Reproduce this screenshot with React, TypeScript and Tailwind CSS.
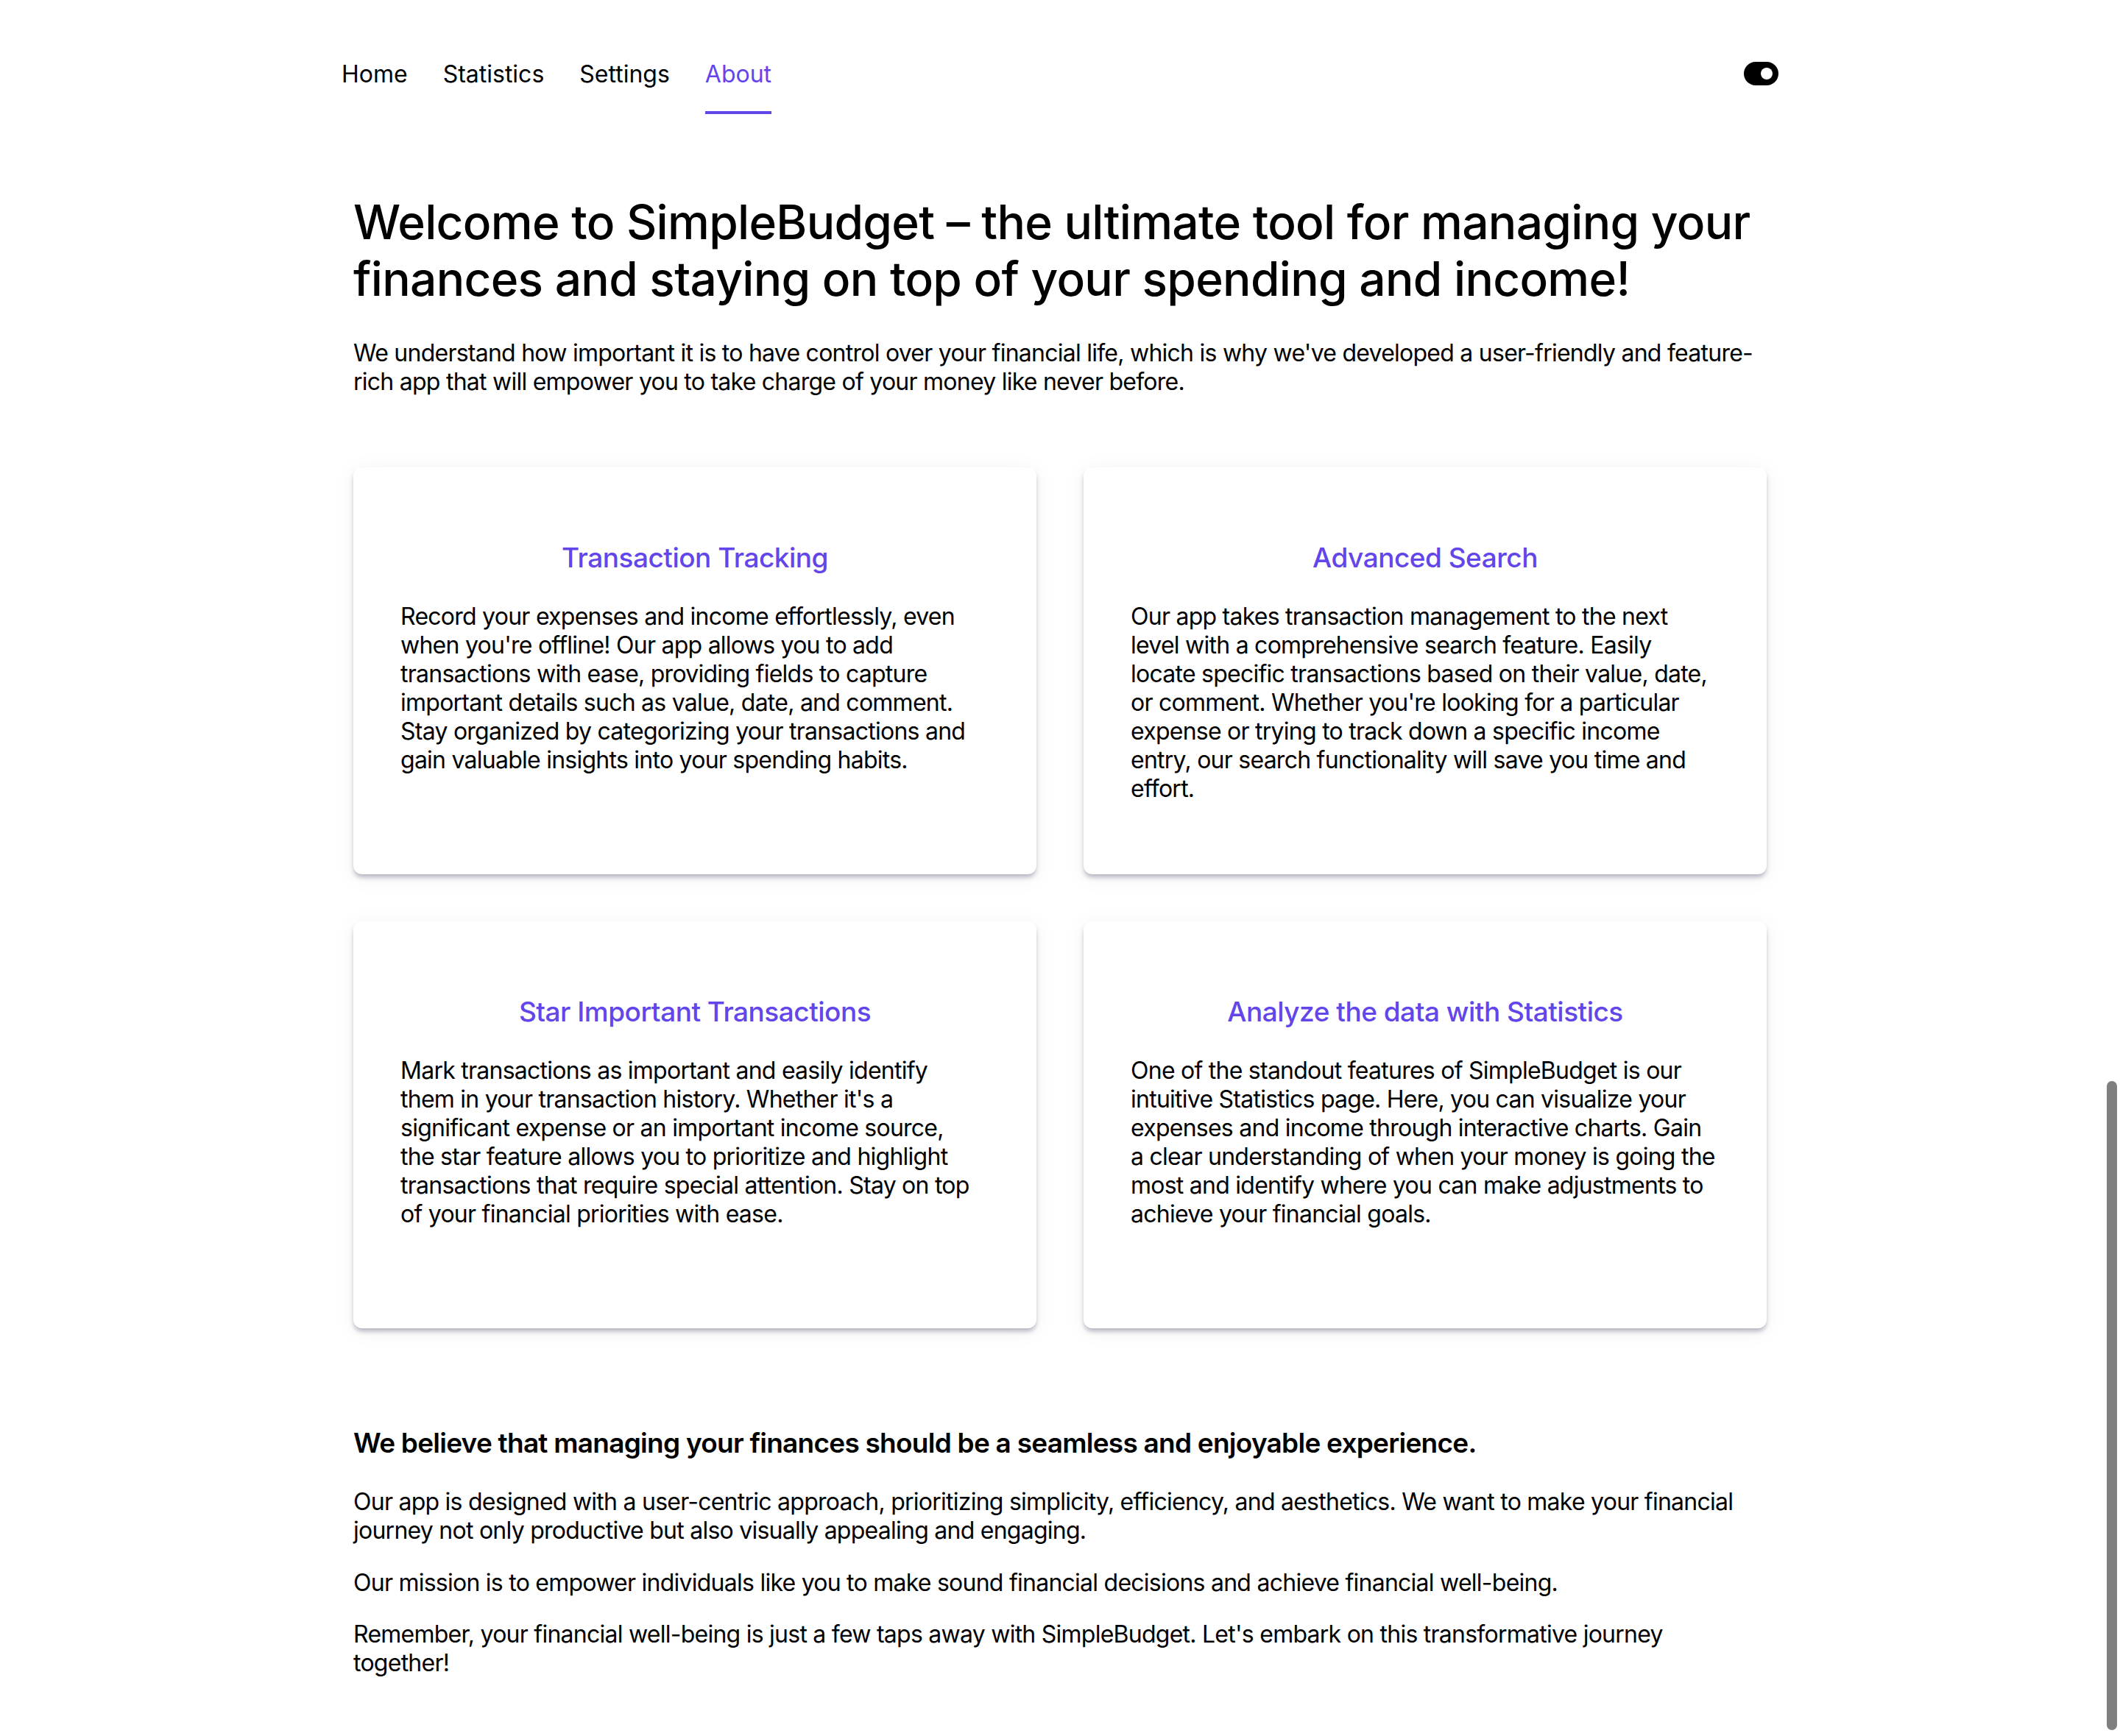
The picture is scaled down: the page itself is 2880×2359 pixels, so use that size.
import type { ReactNode } from "react";

const features: { title: string; text: ReactNode }[] = [
  {
    title: "Transaction Tracking",
    text: "Record your expenses and income effortlessly, even when you're offline! Our app allows you to add transactions with ease, providing fields to capture important details such as value, date, and comment. Stay organized by categorizing your transactions and gain valuable insights into your spending habits.",
  },
  {
    title: "Advanced Search",
    text: "Our app takes transaction management to the next level with a comprehensive search feature. Easily locate specific transactions based on their value, date, or comment. Whether you're looking for a particular expense or trying to track down a specific income entry, our search functionality will save you time and effort.",
  },
  {
    title: "Star Important Transactions",
    text: (
      <>
        Mark transactions as important and easily identify
        <br />
        them in your transaction history. Whether it's a significant expense or an important income source,
        <br />
        the star feature allows you to prioritize and highlight transactions that require special attention. Stay on top of your financial priorities with ease.
      </>
    ),
  },
  {
    title: "Analyze the data with Statistics",
    text: "One of the standout features of SimpleBudget is our intuitive Statistics page. Here, you can visualize your expenses and income through interactive charts. Gain a clear understanding of when your money is going the most and identify where you can make adjustments to achieve your financial goals.",
  },
];

const links = ["Home", "Statistics", "Settings", "About"];

function FeatureCard(props: { title: string; text: ReactNode }) {
  return (
    <div className="bg-white rounded-[12px] px-[64px] pt-[100px] pb-[97px] shadow-[0_5px_6px_-1px_rgba(70,70,105,0.38),0_4px_30px_rgba(0,0,0,0.06)]">
      <h3 className="text-center text-[37px] leading-[45px] font-medium tracking-[-0.5px] text-[#6246ea]">{props.title}</h3>
      <p className="mt-[38px] text-[32px] leading-[39px] tracking-[-0.75px]">{props.text}</p>
    </div>
  );
}

export default function App() {
  return (
    <div className="min-h-[2359px] bg-white text-black font-['Inter',sans-serif] relative">
      <nav className="w-[1952px] mx-auto pt-[50px] flex justify-between items-center">
        <div className="flex gap-[48px]">
          {links.map((l) => (
            <a
              key={l}
              className={
                l === "About"
                  ? "py-[31px] text-[32px] leading-[39px] border-b-4 border-[#6246ea] text-[#6246ea]"
                  : "py-[31px] text-[32px] leading-[39px] border-b-4 border-transparent"
              }
            >
              {l}
            </a>
          ))}
        </div>
        <div className="w-[47px] h-[32px] rounded-full bg-black flex items-center justify-end pr-[8px] -mt-[6px]">
          <div className="w-[16px] h-[16px] rounded-full bg-white" />
        </div>
      </nav>

      <main className="w-[1920px] mx-auto pb-[80px]">
        <h1 className="mt-[108px] max-w-[1910px] text-[64px] leading-[77px] font-medium tracking-[-0.7px]">
          Welcome to SimpleBudget – the ultimate tool for managing your finances and staying on top of your spending and income!
        </h1>
        <p className="mt-[43px] max-w-[1910px] text-[32px] leading-[39px] tracking-[-0.75px]">
          We understand how important it is to have control over your financial life, which is why we've developed a user-friendly and feature-rich app that will empower you to take charge of your money like never before.
        </p>

        <div className="mt-[97px] grid grid-cols-2 auto-rows-fr gap-[64px]">
          {features.map((f) => (
            <FeatureCard key={f.title} title={f.title} text={f.text} />
          ))}
        </div>

        <h3 className="mt-[133px] max-w-[1910px] text-[37px] leading-[45px] font-semibold tracking-[-0.75px]">
          We believe that managing your finances should be a seamless and enjoyable experience.
        </h3>
        <p className="mt-[38px] max-w-[1910px] text-[32px] leading-[39px] tracking-[-0.75px]">
          Our app is designed with a user-centric approach, prioritizing simplicity, efficiency, and aesthetics. We want to make your financial journey not only productive but also visually appealing and engaging.
        </p>
        <p className="mt-[32px] max-w-[1910px] text-[32px] leading-[39px] tracking-[-0.75px]">
          Our mission is to empower individuals like you to make sound financial decisions and achieve financial well-being.
        </p>
        <p className="mt-[31px] max-w-[1910px] text-[32px] leading-[39px] tracking-[-0.75px]">
          Remember, your financial well-being is just a few taps away with SimpleBudget. Let's embark on this transformative journey together!
        </p>
      </main>

      {/* overlay scrollbar thumb */}
      <div className="absolute left-[2862px] top-[1469px] w-[14px] h-[882px] rounded-full bg-[#7f7f7f]" />
    </div>
  );
}
